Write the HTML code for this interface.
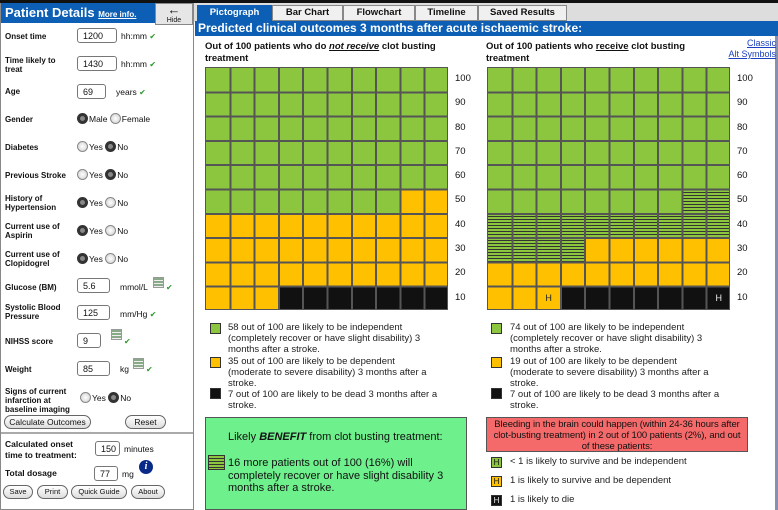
<!DOCTYPE html>
<html><head><meta charset="utf-8"><style>
*{margin:0;padding:0;box-sizing:border-box}
body{width:778px;height:510px;background:#fff;position:relative;overflow:hidden;font-family:"Liberation Sans",Arial,sans-serif;color:#111}
.a{position:absolute}
.lb{position:absolute;left:5px;font-size:8px;font-weight:bold;line-height:9px}
.in{position:absolute;height:15px;border:1px solid #777;border-radius:3px;background:#fff;font-size:9px;padding:2px 0 0 5px}
.u{position:absolute;font-size:8.5px}
.ck{color:#2a9a2a;font-size:8px}
.r{position:absolute;font-size:8.5px;display:flex;align-items:center}
.rb{display:inline-block;width:11px;height:11px;border-radius:50%;border:1px solid #888;background:radial-gradient(#fff,#ccc);margin-right:1px}
.rb.on{border:3px solid #333;background:#888}
.btn{position:absolute;height:14px;border:1px solid #666;border-radius:7px;background:linear-gradient(#fff,#ddd);font-size:8.5px;text-align:center;line-height:12px}
.calc{position:absolute;width:11px;height:11px;background:repeating-linear-gradient(#8a8 0 2px,#eee 2px 3px);border:1px solid #999}
.tab{position:absolute;top:5px;height:16px;background:#f0f0f0;border:1px solid #888;font-size:9.5px;font-weight:bold;text-align:center;line-height:14px}
.grid{position:absolute;width:243px;height:243px;background:#ffc000;border:1px solid #555;overflow:hidden}
.grid i{position:absolute;display:block}
.g{background:#8cc63f}
.k{background:#111}
.h{background:repeating-linear-gradient(#8cc63f 0 2px,#333 2px 3px)}
.ov{position:absolute;inset:0;background:repeating-linear-gradient(90deg,transparent 0 22.3px,#555 22.3px 24.3px),repeating-linear-gradient(0deg,transparent 0 22.3px,#555 22.3px 24.3px);background-position:1px 1px}
.nums{position:absolute;font-size:9.5px;line-height:24.3px}
.leg{position:absolute;font-size:9.5px;line-height:11px;color:#222}
.sw{position:absolute;width:11px;height:11px;border:1px solid #333}
.H{position:absolute;font-size:9px;color:#eee;width:24px;text-align:center;line-height:22px}
</style></head><body>
<div class="a" style="left:0;top:0;width:778px;height:3px;background:#111"></div>
<!-- left panel -->
<div class="a" style="left:0;top:3px;width:194px;height:507px;border:1px solid #888;border-top:none"></div>
<div class="a" style="left:1px;top:3px;width:154px;height:20px;background:#0c5fb5;color:#fff;font-weight:bold;font-size:13px;padding:2px 0 0 4px">Patient Details <span style="font-size:8px;text-decoration:underline">More info.</span></div>
<div class="a" style="left:155px;top:3px;width:38px;height:22px;background:#e6e6e6;border:1px solid #888;text-align:center;font-size:7px;line-height:8px"><b style="font-size:13px;line-height:12px">&#8592;</b><br>Hide</div>
<div class="lb" style="top:32px">Onset time</div><div class="in" style="left:77px;top:28px;width:40px">1200</div><div class="u" style="left:121px;top:31px">hh:mm <span class="ck">✔</span></div>
<div class="lb" style="top:56px">Time likely to<br>treat</div><div class="in" style="left:77px;top:56px;width:40px">1430</div><div class="u" style="left:121px;top:59px">hh:mm <span class="ck">✔</span></div>
<div class="lb" style="top:87px">Age</div><div class="in" style="left:77px;top:84px;width:29px">69</div><div class="u" style="left:116px;top:87px">years <span class="ck">✔</span></div>
<div class="lb" style="top:115px">Gender</div><div class="r" style="left:77px;top:113px"><span class="rb on"></span>Male&nbsp;<span class="rb"></span>Female</div>
<div class="lb" style="top:143px">Diabetes</div><div class="r" style="left:77px;top:141px"><span class="rb"></span>Yes&nbsp;<span class="rb on"></span>No</div>
<div class="lb" style="top:171px">Previous Stroke</div><div class="r" style="left:77px;top:169px"><span class="rb"></span>Yes&nbsp;<span class="rb on"></span>No</div>
<div class="lb" style="top:194px">History of<br>Hypertension</div><div class="r" style="left:77px;top:197px"><span class="rb on"></span>Yes&nbsp;<span class="rb"></span>No</div>
<div class="lb" style="top:222px">Current use of<br>Aspirin</div><div class="r" style="left:77px;top:225px"><span class="rb on"></span>Yes&nbsp;<span class="rb"></span>No</div>
<div class="lb" style="top:250px">Current use of<br>Clopidogrel</div><div class="r" style="left:77px;top:253px"><span class="rb on"></span>Yes&nbsp;<span class="rb"></span>No</div>
<div class="lb" style="top:283px">Glucose (BM)</div><div class="in" style="left:77px;top:278px;width:33px">5.6</div><div class="u" style="left:120px;top:282px">mmol/L</div><div class="calc" style="left:153px;top:277px"></div><div class="u ck" style="left:166px;top:283px">✔</div>
<div class="lb" style="top:303px">Systolic Blood<br>Pressure</div><div class="in" style="left:77px;top:305px;width:33px">125</div><div class="u" style="left:120px;top:309px">mm/Hg <span class="ck">✔</span></div>
<div class="lb" style="top:337px">NIHSS score</div><div class="in" style="left:77px;top:333px;width:24px">9</div><div class="calc" style="left:111px;top:329px"></div><div class="u ck" style="left:124px;top:337px">✔</div>
<div class="lb" style="top:365px">Weight</div><div class="in" style="left:77px;top:361px;width:33px">85</div><div class="u" style="left:120px;top:364px">kg</div><div class="calc" style="left:133px;top:358px"></div><div class="u ck" style="left:146px;top:365px">✔</div>
<div class="lb" style="top:387px">Signs of current<br>infarction at<br>baseline imaging</div><div class="r" style="left:80px;top:392px"><span class="rb"></span>Yes&nbsp;<span class="rb on"></span>No</div>
<div class="btn" style="left:4px;top:415px;width:87px">Calculate Outcomes</div>
<div class="btn" style="left:125px;top:415px;width:41px">Reset</div>
<div class="a" style="left:1px;top:432px;width:192px;height:2px;background:#aaa"></div>
<div class="lb" style="left:5px;top:439px;font-size:8.5px;line-height:11px">Calculated onset<br>time to treatment:</div><div class="in" style="left:95px;top:441px;width:25px">150</div><div class="u" style="left:124px;top:444px">minutes</div>
<div class="lb" style="left:5px;top:469px;font-size:8.5px">Total dosage</div><div class="in" style="left:94px;top:466px;width:24px">77</div><div class="u" style="left:122px;top:469px">mg</div>
<div class="a" style="left:139px;top:460px;width:14px;height:14px;border-radius:50%;background:#0a2a8a;color:#fff;font:bold italic 10px 'Liberation Serif',serif;text-align:center;line-height:14px">i</div>
<div class="btn" style="left:3px;top:485px;width:30px;font-size:7.5px">Save</div>
<div class="btn" style="left:37px;top:485px;width:31px;font-size:7.5px">Print</div>
<div class="btn" style="left:71px;top:485px;width:56px;font-size:7.5px">Quick Guide</div>
<div class="btn" style="left:131px;top:485px;width:34px;font-size:7.5px">About</div>
<!-- tabs -->
<div class="a" style="left:194px;top:3px;width:584px;height:19px;background:#ddd"></div>
<div class="tab" style="left:197px;width:75px;background:#0c5fb5;color:#fff;border-color:#0c5fb5">Pictograph</div>
<div class="tab" style="left:272px;width:71px">Bar Chart</div>
<div class="tab" style="left:343px;width:72px">Flowchart</div>
<div class="tab" style="left:415px;width:63px">Timeline</div>
<div class="tab" style="left:478px;width:89px">Saved Results</div>
<div class="a" style="left:195px;top:21px;width:583px;height:15px;background:#0c5fb5;color:#fff;font-weight:bold;font-size:12px;padding-left:3px;line-height:15px">Predicted clinical outcomes 3 months after acute ischaemic stroke:</div>
<div class="a" style="left:775px;top:36px;width:3px;height:474px;background:#8890b0"></div>
<!-- headings -->
<div class="a" style="left:205px;top:41px;font-size:9.5px;font-weight:bold;line-height:12px;width:270px">Out of 100 patients who do <i><u>not receive</u></i> clot busting treatment</div>
<div class="a" style="left:486px;top:41px;font-size:9.5px;font-weight:bold;line-height:12px;width:235px">Out of 100 patients who <u>receive</u> clot busting treatment</div>
<div class="a" style="left:720px;top:38px;font-size:9px;color:#1a3fc0;text-decoration:underline;line-height:11px;text-align:right;width:56px">Classic<br>Alt Symbols</div>
<!-- left grid -->
<div class="grid" style="left:205px;top:67px">
<i class="g" style="left:0;top:0;width:243px;height:121.5px"></i>
<i class="g" style="left:0;top:121.5px;width:194.4px;height:24.3px"></i>
<i class="k" style="left:72.9px;top:218.7px;width:171px;height:25px"></i>
<div class="ov"></div></div>
<div class="nums" style="left:455px;top:67px">100<br>90<br>80<br>70<br>60<br>50<br>40<br>30<br>20<br>10</div>
<!-- right grid -->
<div class="grid" style="left:487px;top:67px">
<i class="g" style="left:0;top:0;width:243px;height:121.5px"></i>
<i class="g" style="left:0;top:121.5px;width:194.4px;height:24.3px"></i>
<i class="h" style="left:194.4px;top:121.5px;width:49px;height:24.3px"></i>
<i class="h" style="left:0;top:145.8px;width:243px;height:24.3px"></i>
<i class="h" style="left:0;top:170.1px;width:97.2px;height:24.3px"></i>
<i class="k" style="left:72.9px;top:218.7px;width:171px;height:25px"></i>
<div class="ov"></div>
<div class="H" style="left:48.6px;top:219px;color:#222">H</div>
<div class="H" style="left:218.7px;top:219px">H</div>
</div>
<div class="nums" style="left:737px;top:67px">100<br>90<br>80<br>70<br>60<br>50<br>40<br>30<br>20<br>10</div>
<!-- legends -->
<div class="sw" style="left:210px;top:323px;background:#8cc63f"></div>
<div class="leg" style="left:228px;top:322px;width:200px">58 out of 100 are likely to be independent (completely recover or have slight disability) 3 months after a stroke.</div>
<div class="sw" style="left:210px;top:357px;background:#ffc000"></div>
<div class="leg" style="left:228px;top:356px;width:212px">35 out of 100 are likely to be dependent (moderate to severe disability) 3 months after a stroke.</div>
<div class="sw" style="left:210px;top:388px;background:#111"></div>
<div class="leg" style="left:228px;top:389px;width:212px">7 out of 100 are likely to be dead 3 months after a stroke.</div>
<div class="sw" style="left:491px;top:323px;background:#8cc63f"></div>
<div class="leg" style="left:510px;top:322px;width:200px">74 out of 100 are likely to be independent (completely recover or have slight disability) 3 months after a stroke.</div>
<div class="sw" style="left:491px;top:357px;background:#ffc000"></div>
<div class="leg" style="left:510px;top:356px;width:212px">19 out of 100 are likely to be dependent (moderate to severe disability) 3 months after a stroke.</div>
<div class="sw" style="left:491px;top:388px;background:#111"></div>
<div class="leg" style="left:510px;top:389px;width:212px">7 out of 100 are likely to be dead 3 months after a stroke.</div>
<!-- benefit box -->
<div class="a" style="left:205px;top:417px;width:262px;height:93px;background:#6ef08c;border:1px solid #555"></div>
<div class="a" style="left:228px;top:431px;font-size:11px">Likely <b><i>BENEFIT</i></b> from clot busting treatment:</div>
<div class="a" style="left:208px;top:455px;width:17px;height:15px;border:1px solid #333;background:repeating-linear-gradient(#8cc63f 0 2px,#333 2px 3px)"></div>
<div class="a" style="left:228px;top:457px;width:228px;font-size:11px;line-height:12.5px">16 more patients out of 100 (16%) will completely recover or have slight disability 3 months after a stroke.</div>
<!-- bleed box -->
<div class="a" style="left:486px;top:417px;width:262px;height:35px;background:#f46a6a;border:1px solid #555;font-size:9.5px;line-height:11px;text-align:center;padding:1px 2px 0;color:#111;letter-spacing:-0.1px">Bleeding in the brain could happen (within 24-36 hours after clot-busting treatment) in 2 out of 100 patients (2%), and out of these patients:</div>
<div class="sw" style="left:491px;top:457px;background:#8cc63f;font-size:8px;text-align:center;line-height:9px">H</div>
<div class="leg" style="left:510px;top:456px">&lt; 1 is likely to survive and be independent</div>
<div class="sw" style="left:491px;top:476px;background:#ffc000;font-size:8px;text-align:center;line-height:9px">H</div>
<div class="leg" style="left:510px;top:475px">1 is likely to survive and be dependent</div>
<div class="sw" style="left:491px;top:495px;background:#111;color:#eee;font-size:8px;text-align:center;line-height:9px">H</div>
<div class="leg" style="left:510px;top:494px">1 is likely to die</div>
</body></html>
